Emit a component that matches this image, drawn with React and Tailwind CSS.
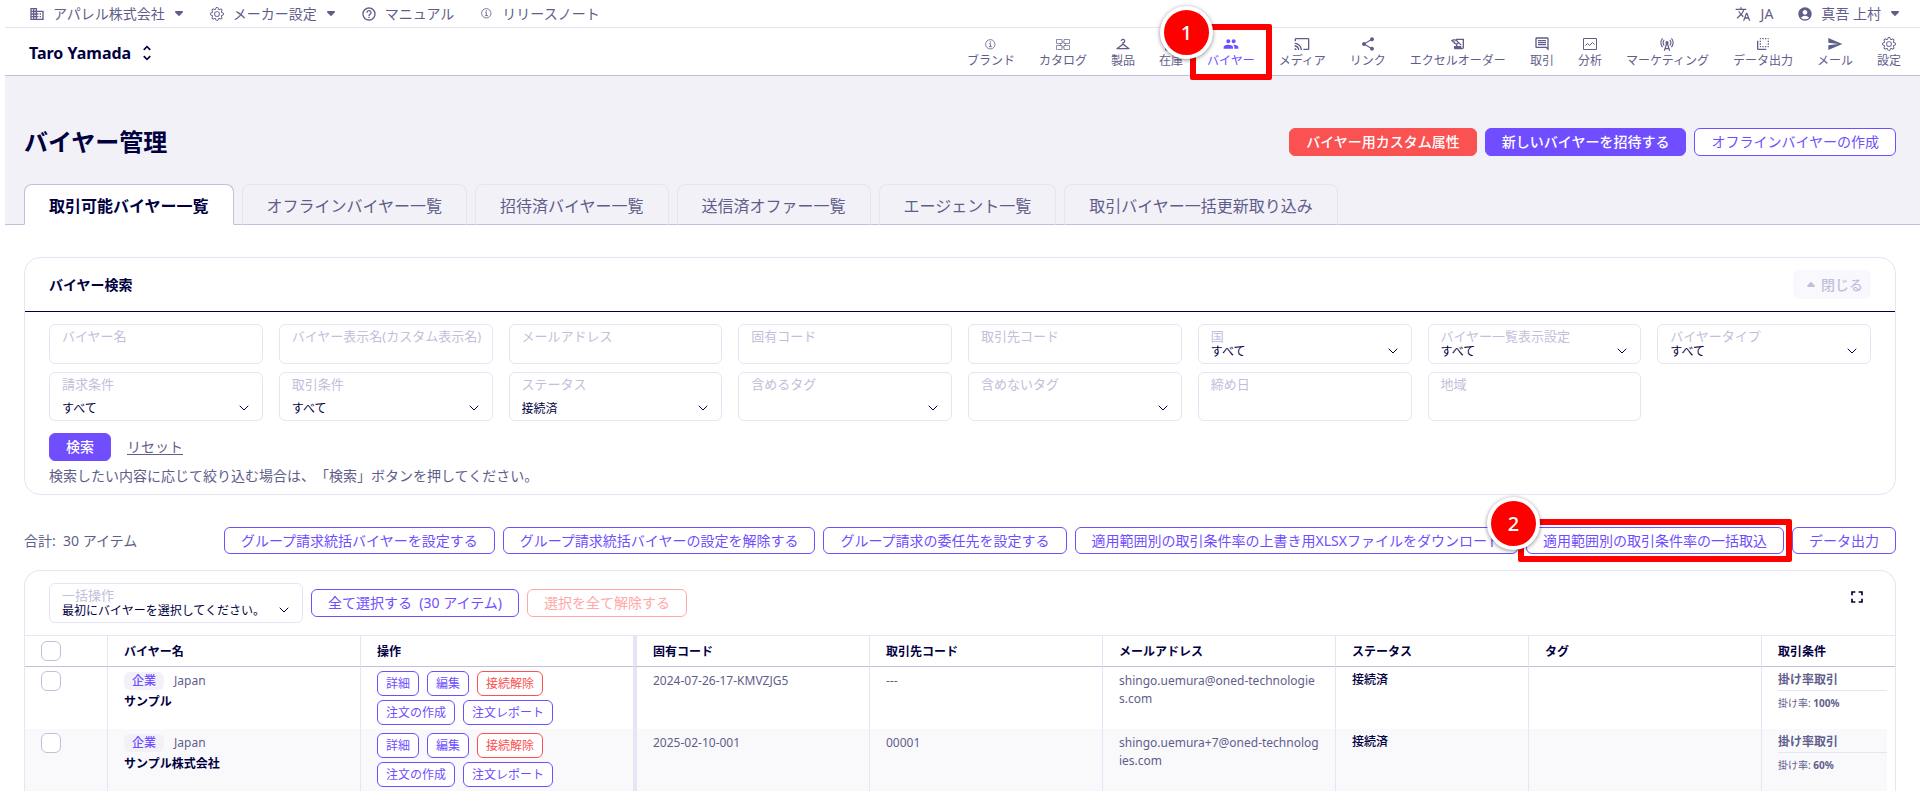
import { ChevronDown } from 'lucide-react';
import { BsGear } from 'react-icons/bs';
import { IoInformationCircleOutline } from 'react-icons/io5';
import {
    MdAccountCircle,
    MdBusiness,
    MdCast,
    MdCellTower,
    MdCheckroom,
    MdFullscreen,
    MdHelpOutline,
    MdHistoryEdu,
    MdOutlineComment,
    MdOutlineFlipToBack,
    MdOutlineInventory2,
    MdPeople,
    MdSend,
    MdShare,
    MdTranslate,
    MdUnfoldMore,
} from 'react-icons/md';

const CaretIcon = ({ className }) => (
    <svg viewBox="0 0 16 10" className={className} fill="currentColor" aria-hidden="true">
        <path d="M2 0h12c1.8 0 2.6 2 1.4 3.2L9.6 9.2c-.9.9-2.3.9-3.2 0L.6 3.2C-.6 2 .2 0 2 0z" />
    </svg>
);

const CatalogIcon = ({ className }) => (
    <svg viewBox="0 0 16 16" className={className} fill="none" stroke="currentColor" strokeWidth="0.7" aria-hidden="true">
        <path d="M1.5 3.5h5.5v4h-5.5zM9 3.5h5.5v4h-5.5zM1.5 9.5h5.5v4h-5.5zM9 9.5h5.5v4h-5.5z" />
        <path d="M5.5 7.5v2M10.5 7.5v2M7 6h2M7 11h2" />
    </svg>
);

const ChartIcon = ({ className }) => (
    <svg viewBox="0 0 16 16" className={className} fill="none" stroke="currentColor" aria-hidden="true">
        <path d="M1.5 2.5h13v11h-13z" />
        <path d="M3.5 9.5l2-2 2 2 3-3 2 2" />
    </svg>
);

const InfoIcon = () => <IoInformationCircleOutline className="size-[13px]" />;

const navItems = [
    { icon: InfoIcon, label: 'ブランド' },
    { icon: CatalogIcon, label: 'カタログ' },
    { icon: MdCheckroom, label: '製品' },
    { icon: MdOutlineInventory2, label: '在庫' },
    { icon: MdPeople, label: 'バイヤー', active: true },
    { icon: MdCast, label: 'メディア' },
    { icon: MdShare, label: 'リンク' },
    { icon: MdHistoryEdu, label: 'エクセルオーダー' },
    { icon: MdOutlineComment, label: '取引' },
    { icon: ChartIcon, label: '分析' },
    { icon: MdCellTower, label: 'マーケティング' },
    { icon: MdOutlineFlipToBack, label: 'データ出力' },
    { icon: MdSend, label: 'メール' },
    { icon: BsGear, label: '設定', small: true },
];

const tabs = [
    '取引可能バイヤー一覧',
    'オフラインバイヤー一覧',
    '招待済バイヤー一覧',
    '送信済オファー一覧',
    'エージェント一覧',
    '取引バイヤー一括更新取り込み',
];

const basicFields = [
    { id: 'name', label: 'バイヤー名' },
    { id: 'display-name', label: 'バイヤー表示名(カスタム表示名)' },
    { id: 'email', label: 'メールアドレス' },
    { id: 'code', label: '固有コード' },
    { id: 'partner-code', label: '取引先コード' },
    { id: 'country', label: '国', options: ['すべて'] },
    { id: 'list-view', label: 'バイヤー一覧表示設定', options: ['すべて'] },
    { id: 'type', label: 'バイヤータイプ', options: ['すべて'] },
];

const detailFields = [
    { id: 'billing', label: '請求条件', options: ['すべて'] },
    { id: 'terms', label: '取引条件', options: ['すべて'] },
    { id: 'status', label: 'ステータス', options: ['接続済'] },
    { id: 'include-tag', label: '含めるタグ', options: [''] },
    { id: 'exclude-tag', label: '含めないタグ', options: [''] },
    { id: 'closing-day', label: '締め日' },
    { id: 'region', label: '地域' },
];

const columns = ['バイヤー名', '操作', '固有コード', '取引先コード', 'メールアドレス', 'ステータス', 'タグ', '取引条件'];

const buyers = [
    {
        name: 'サンプル',
        code: '2024-07-26-17-KMVZJG5',
        partnerCode: '---',
        email: 'shingo.uemura@oned-technologies.com',
        rate: '100%',
    },
    {
        name: 'サンプル株式会社',
        code: '2025-02-10-001',
        partnerCode: '00001',
        email: 'shingo.uemura+7@oned-technologies.com',
        rate: '60%',
    },
];

const buttonStyles = {
    primary: 'border-[#704dff] bg-[#704dff] text-white font-medium',
    danger: 'border-[#fa5252] bg-[#fa5252] text-white font-medium',
    outline: 'border-[#704dff] bg-white text-[#704dff]',
    disabled: 'border-[#ffa8a8] bg-white text-[#ffa8a8]',
};

const Button = ({ variant = 'outline', className = 'h-7', children }) => (
    <button
        type="button"
        disabled={variant === 'disabled'}
        className={`flex shrink-0 items-center rounded-md border px-4 text-sm leading-5 whitespace-nowrap ${buttonStyles[variant]} ${className}`}
    >
        {children}
    </button>
);

const RowButton = ({ danger, children }) => (
    <button
        type="button"
        className={`h-[25px] rounded-md border bg-white px-2 text-xs whitespace-nowrap ${
            danger ? 'border-[#fa5252] text-[#fa5252]' : 'border-[#704dff] text-[#704dff]'
        }`}
    >
        {children}
    </button>
);

const Field = ({ id, label, options, className }) => (
    <div className={`relative flex flex-col justify-between rounded-md border border-[#e6e4f5] bg-white px-3 py-[3px] text-xs ${className}`}>
        <label htmlFor={id} className="text-[13px] leading-4 whitespace-nowrap text-[#c1c0dc]">
            {label}
        </label>
        {options ? (
            <>
                <select id={id} className="h-4 w-full appearance-none bg-transparent leading-4 text-[#01003f] outline-none">
                    {options.map((option) => (
                        <option key={option}>{option}</option>
                    ))}
                </select>
                <ChevronDown className="pointer-events-none absolute right-2.5 bottom-1 size-4 text-[#01003f]" strokeWidth={1.5} />
            </>
        ) : (
            <input id={id} type="text" className="h-4 w-full bg-transparent text-[#01003f] outline-none" />
        )}
    </div>
);

const Marker = ({ number, className }) => (
    <span
        className={`absolute z-20 flex size-[53px] items-center justify-center rounded-full border-4 border-white bg-[#ff0000] text-xl font-medium text-white shadow-[0_1px_4px_rgba(0,0,0,0.45)] ${className}`}
    >
        {number}
    </span>
);

const TopBar = () => (
    <div className="flex h-7 items-center justify-between border-b border-[#e6e4f0] pr-[19px] pl-6 text-sm leading-5">
        <div className="flex items-center gap-6">
            <a href="#company" className="flex items-center gap-2">
                <MdBusiness className="size-4" />
                アパレル株式会社
                <CaretIcon className="mr-0.5 ml-0.5 h-[5px] w-2" />
            </a>
            <a href="#maker" className="flex items-center gap-2">
                <span className="flex size-4 items-center justify-center">
                    <BsGear className="size-3.5" />
                </span>
                メーカー設定
                <CaretIcon className="mr-0.5 ml-0.5 h-[5px] w-2" />
            </a>
            <a href="#manual" className="flex items-center gap-2">
                <MdHelpOutline className="size-4" />
                マニュアル
            </a>
            <a href="#release" className="flex items-center gap-2">
                <span className="flex size-4 items-center justify-center">
                    <InfoIcon />
                </span>
                リリースノート
            </a>
        </div>
        <div className="flex items-center gap-6">
            <a href="#language" className="flex items-center gap-2.5">
                <MdTranslate className="size-4" />
                JA
            </a>
            <a href="#account" className="flex items-center gap-2">
                <MdAccountCircle className="size-4" />
                真吾 上村
                <CaretIcon className="mr-0.5 ml-0.5 h-[5px] w-2" />
            </a>
        </div>
    </div>
);

const NavBar = () => (
    <header className="flex h-12 justify-between border-b border-[#c1c0dc] pr-[19px] pl-6">
        <button type="button" className="flex items-center gap-1.5 pt-0.5 font-bold text-[#01003f]">
            Taro Yamada
            <MdUnfoldMore className="size-5" />
        </button>
        <nav className="flex items-start gap-6 pt-2">
            {navItems.map(({ icon: Icon, label, active, small }) => (
                <a
                    key={label}
                    href={`#${label}`}
                    className={`relative flex flex-col items-center text-xs leading-[18px] ${active ? 'text-[#704dff]' : ''}`}
                >
                    <span className="flex size-4 items-center justify-center">
                        <Icon className={small ? 'size-3.5' : 'size-4'} />
                    </span>
                    {label}
                    {active && (
                        <>
                            <span className="absolute -inset-x-[17px] -top-3 -bottom-2.5 z-10 rounded-xs border-[6px] border-[#ff0000]" />
                            <Marker number="1" className="-top-[30px] -left-[47px]" />
                        </>
                    )}
                </a>
            ))}
        </nav>
    </header>
);

const PageHeader = () => (
    <div className="border-b border-[#c1c0dc] bg-[#f2f1f7] pt-[52px] pr-6 pl-[19px]">
        <div className="flex h-7 items-center justify-between">
            <h1 className="text-2xl font-bold text-[#01003f]">バイヤー管理</h1>
            <div className="flex gap-2">
                <Button variant="danger">バイヤー用カスタム属性</Button>
                <Button variant="primary">新しいバイヤーを招待する</Button>
                <Button>オフラインバイヤーの作成</Button>
            </div>
        </div>
        <div className="mt-7 -mb-px flex gap-2">
            {tabs.map((tab, index) => (
                <button
                    key={tab}
                    type="button"
                    className={`h-[41px] rounded-t-lg border px-6 pt-0.5 text-base whitespace-nowrap ${
                        index === 0
                            ? 'border-[#c1c0dc] border-b-white bg-white font-bold text-[#01003f]'
                            : 'border-[#e6e4f5] border-b-[#c1c0dc]'
                    }`}
                >
                    {tab}
                </button>
            ))}
        </div>
    </div>
);

const SearchPanel = () => (
    <section className="rounded-2xl border border-[#e6e4f5]">
        <div className="flex h-[54px] items-center justify-between border-b border-[#01003f] px-6">
            <h2 className="text-sm font-bold text-[#01003f]">バイヤー検索</h2>
            <button
                type="button"
                className="flex h-[29px] items-center gap-1.5 rounded-md bg-[#f9f9fd] pr-2 pl-3.5 text-sm font-medium text-[#c1c0dc]"
            >
                <CaretIcon className="h-[5px] w-2 rotate-180" />
                閉じる
            </button>
        </div>
        <form className="px-6 pt-3 pb-2">
            <div className="grid grid-cols-8 gap-x-4 gap-y-2">
                {basicFields.map((field) => (
                    <Field key={field.id} {...field} className="h-10" />
                ))}
                {detailFields.map((field) => (
                    <Field key={field.id} {...field} className="h-[49px]" />
                ))}
            </div>
            <div className="mt-3 flex items-center gap-4">
                <Button variant="primary">検索</Button>
                <a href="#reset" className="text-sm underline underline-offset-2">
                    リセット
                </a>
            </div>
            <p className="mt-1 text-sm leading-[21px] [text-spacing-trim:space-all]">
                検索したい内容に応じて絞り込む場合は、「検索」ボタンを押してください。
            </p>
        </form>
    </section>
);

const ListActions = () => (
    <div className="mt-8 flex items-center justify-between">
        <p className="text-sm leading-5 whitespace-pre">合計:  30 アイテム</p>
        <div className="flex gap-2">
            <Button className="h-[27px]">グループ請求統括バイヤーを設定する</Button>
            <Button className="h-[27px]">グループ請求統括バイヤーの設定を解除する</Button>
            <Button className="h-[27px]">グループ請求の委任先を設定する</Button>
            <Button className="h-[27px]">適用範囲別の取引条件率の上書き用XLSXファイルをダウンロード</Button>
            <div className="relative">
                <Button className="h-[27px]">適用範囲別の取引条件率の一括取込</Button>
                <span className="pointer-events-none absolute -inset-x-2 -inset-y-2 z-10 rounded-xs border-[6px] border-[#ff0000]" />
                <Marker number="2" className="-top-[30px] -left-[39px]" />
            </div>
            <Button className="h-[27px]">データ出力</Button>
        </div>
    </div>
);

const Checkbox = ({ label }) => (
    <input
        type="checkbox"
        aria-label={label}
        className="block size-5 appearance-none rounded-md border border-[#c1c0dc] bg-white"
    />
);

const BuyerTable = () => (
    <table className="w-full table-fixed border-separate border-spacing-0 border-t border-[#e6e4f5] text-xs">
        <colgroup>
            <col className="w-[82px]" />
            <col className="w-[253px]" />
            <col className="w-[273px]" />
            <col className="w-[236px]" />
            <col className="w-[233px]" />
            <col className="w-[233px]" />
            <col className="w-[193px]" />
            <col className="w-[233px]" />
            <col />
            <col className="w-2" />
        </colgroup>
        <thead>
            <tr className="h-[31px] text-left text-[#01003f]">
                <th className="border-b border-[#c1c0dc] pl-4">
                    <Checkbox label="すべて" />
                </th>
                {columns.map((column) => (
                    <th
                        key={column}
                        className={`border-b border-b-[#c1c0dc] border-l-[#e6e4f5] pt-0.5 pl-4 font-bold ${
                            column === '固有コード' ? 'border-l-4' : 'border-l'
                        }`}
                    >
                        {column}
                    </th>
                ))}
                <td className="border-b border-[#c1c0dc]" />
            </tr>
        </thead>
        <tbody>
            {buyers.map((buyer, index) => {
                const cell = `border-[#e6e4f5] pl-4 align-top leading-[18px] ${index % 2 ? 'bg-[#f9f9fc]' : ''}`;
                return (
                    <tr key={buyer.code} className="h-[62px]">
                        <td className={`${cell} pt-1`}>
                            <Checkbox label={buyer.name} />
                        </td>
                        <td className={`${cell} border-l pt-[5px]`}>
                            <div className="flex items-center gap-2.5">
                                <span className="rounded-md bg-[#f2f1f7] px-2 font-medium text-[#704dff]">企業</span>
                                Japan
                            </div>
                            <p className="mt-0.5 leading-5 font-bold text-[#01003f]">{buyer.name}</p>
                        </td>
                        <td className={`${cell} border-l pt-1`}>
                            <div className="flex gap-2">
                                <RowButton>詳細</RowButton>
                                <RowButton>編集</RowButton>
                                <RowButton danger>接続解除</RowButton>
                            </div>
                            <div className="mt-1 flex gap-2">
                                <RowButton>注文の作成</RowButton>
                                <RowButton>注文レポート</RowButton>
                            </div>
                        </td>
                        <td className={`${cell} border-l-4 pt-[5px]`}>{buyer.code}</td>
                        <td className={`${cell} border-l pt-[5px]`}>{buyer.partnerCode}</td>
                        <td className={`${cell} border-l pt-[5px] pr-4 break-all`}>{buyer.email}</td>
                        <td className={`${cell} border-l pt-1 font-medium text-[#01003f]`}>接続済</td>
                        <td className={`${cell} border-l`} />
                        <td className={`${cell} border-l pt-1`}>
                            <p className="h-5 border-b border-[#e6e4f5] font-bold">掛け率取引</p>
                            <p className="mt-1 text-[10px] leading-4">
                                掛け率: <b>{buyer.rate}</b>
                            </p>
                        </td>
                        <td />
                    </tr>
                );
            })}
        </tbody>
    </table>
);

export default function App() {
    return (
        <div className="h-screen overflow-hidden bg-white pl-[5px] font-['Noto_Sans','Noto_Sans_CJK_JP',sans-serif] text-[#5f5e8b]">
            <TopBar />
            <NavBar />
            <PageHeader />
            <main className="pt-8 pr-6 pl-[19px]">
                <SearchPanel />
                <ListActions />
                <section className="mt-4 rounded-t-2xl border border-b-0 border-[#e6e4f5]">
                    <div className="flex items-center justify-between px-6 py-3">
                        <div className="flex items-center gap-2">
                            <Field
                                id="bulk-action"
                                label="一括操作"
                                options={['最初にバイヤーを選択してください。']}
                                className="h-10 w-[254px]"
                            />
                            <Button>
                                <span className="whitespace-pre">全て選択する  (30 アイテム)</span>
                            </Button>
                            <Button variant="disabled">選択を全て解除する</Button>
                        </div>
                        <button type="button" aria-label="全画面" className="mb-3 px-1 text-[#01003f]">
                            <MdFullscreen className="size-5" />
                        </button>
                    </div>
                    <BuyerTable />
                </section>
            </main>
        </div>
    );
}
